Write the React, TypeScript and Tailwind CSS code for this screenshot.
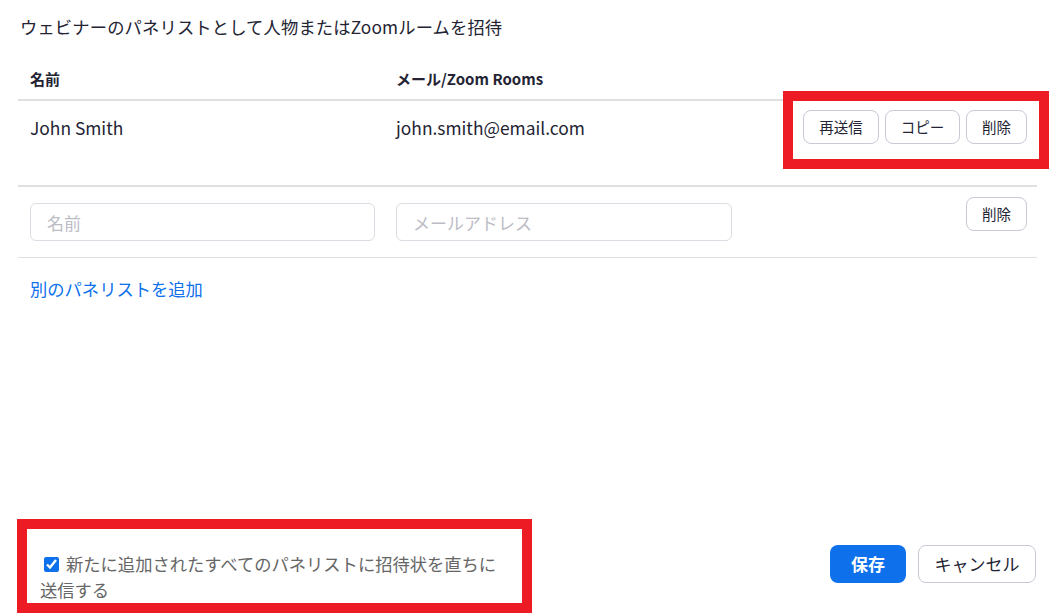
import React, { useState } from 'react';

const font = { fontFamily: '"Noto Sans CJK JP", "Noto Sans", sans-serif' };

function SmallButton({ label, width }: { label: string; width: string }) {
  return (
    <button className={`${width} h-[34px] rounded-[8px] border border-[#c9c9d6] bg-white text-[14.5px] text-[#232333] leading-none`}>
      {label}
    </button>
  );
}

export default function App() {
  const [sendNow, setSendNow] = useState(true);

  return (
    <div style={font} className="w-[1062px] h-[615px] bg-white flex flex-col overflow-hidden">
      {/* Title */}
      <div className="pl-[20px] pt-[14px] text-[17.3px] leading-[26px] tracking-[0.15px] text-[#232333]">
        ウェビナーのパネリストとして人物またはZoomルームを招待
      </div>

      {/* Table */}
      <div className="ml-[18px] w-[1019px] mt-[20px]">
        <div className="h-[41px] flex items-center border-b-2 border-[#e0e0e0] text-[15px] font-bold text-[#232333]">
          <div className="w-[378px] pl-[12px]">名前</div>
          <div>メール/Zoom Rooms</div>
        </div>

        <div className="h-[86px] pt-[9px] flex items-start border-b-2 border-[#e0e0e0]">
          <div className="w-[378px] pl-[12px] h-[36px] flex items-center text-[17.4px] text-[#232333]">
            John Smith
          </div>
          <div className="flex-1 h-[36px] flex items-center text-[17.4px] text-[#232333]">
            john.smith@email.com
          </div>
          <div className="relative flex gap-[6px] mr-[10px]">
            <SmallButton label="再送信" width="w-[76px]" />
            <SmallButton label="コピー" width="w-[75px]" />
            <SmallButton label="削除" width="w-[61px]" />
            <div className="absolute left-[-20px] top-[-19px] w-[266px] h-[78px] border-[10px] border-[#ed1c24] pointer-events-none" />
          </div>
        </div>

        <div className="h-[71px] flex items-start border-b border-[#e0e0e0]">
          <div className="w-[378px] pl-[12px] pt-[16px]">
            <input
              placeholder="名前"
              className="w-[345px] h-[38px] rounded-[6px] border border-[#dcdce4] px-[16px] text-[17px] placeholder:text-[#bcbcc4] outline-none"
            />
          </div>
          <div className="flex-1 pt-[16px]">
            <input
              placeholder="メールアドレス"
              className="w-[336px] h-[38px] rounded-[6px] border border-[#dcdce4] px-[16px] text-[17px] placeholder:text-[#bcbcc4] outline-none"
            />
          </div>
          <div className="pt-[10px] mr-[10px]">
            <SmallButton label="削除" width="w-[61px]" />
          </div>
        </div>

        <div className="mt-[19px] pl-[12px] text-[17.3px] leading-[24px] text-[#0e71eb]">
          別のパネリストを追加
        </div>
      </div>

      {/* Footer */}
      <div className="mt-auto pb-[12px] flex items-start justify-between">
        <div className="relative ml-[40px] mt-[6px] w-[470px] text-[17.3px] leading-[26px] text-[#666]">
          <label className="cursor-pointer">
            <input
              type="checkbox"
              checked={sendNow}
              onChange={() => setSendNow(!sendNow)}
              className="w-[15px] h-[15px] ml-[4px] mr-[7px] align-[-1px] accent-[#0e71eb]"
            />
            新たに追加されたすべてのパネリストに招待状を直ちに送信する
          </label>
          <div className="absolute left-[-23px] top-[-32px] w-[515px] h-[94px] border-[10px] border-[#ed1c24] pointer-events-none" />
        </div>

        <div className="flex gap-[12px] mr-[26px]">
          <button className="w-[76px] h-[38px] rounded-[8px] bg-[#0e71eb] text-white text-[17px] font-bold">
            保存
          </button>
          <button className="w-[118px] h-[38px] rounded-[8px] border border-[#c9c9d6] bg-white text-[17px] text-[#232333]">
            キャンセル
          </button>
        </div>
      </div>
    </div>
  );
}
